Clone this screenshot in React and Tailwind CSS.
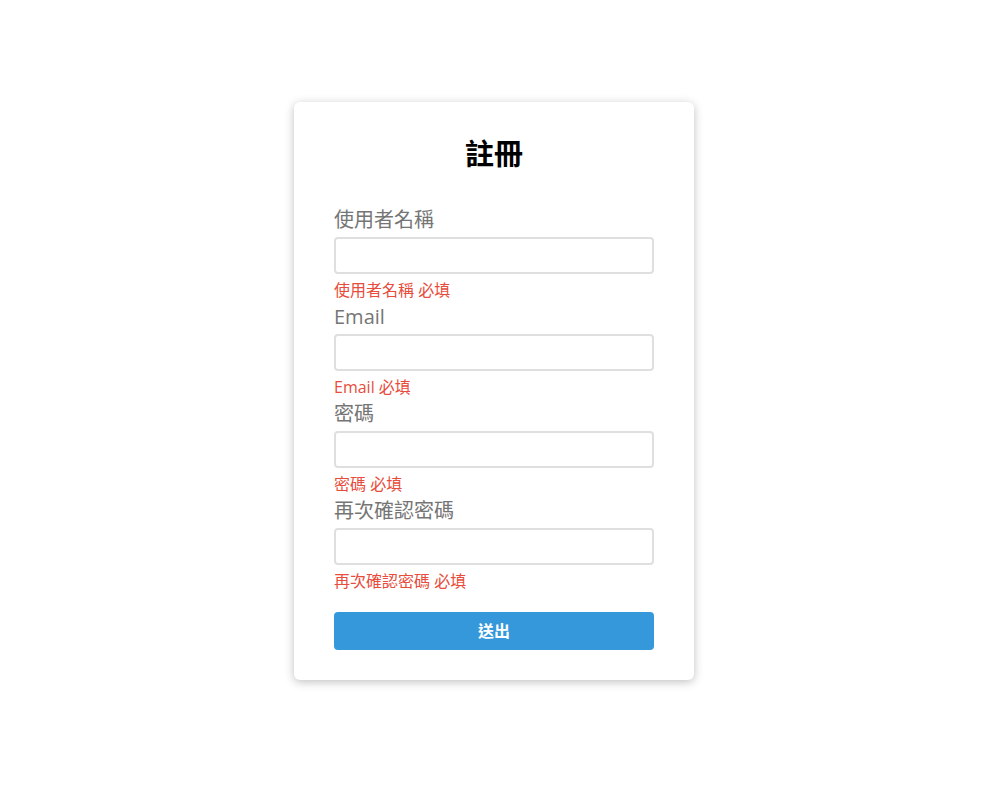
import React from 'react';

const fields = [
  { label: '使用者名稱', type: 'text' },
  { label: 'Email', type: 'email' },
  { label: '密碼', type: 'password' },
  { label: '再次確認密碼', type: 'password' },
];

const Field = ({ label, type }) => (
  <div>
    <label className="block text-[20px] leading-[27px] pt-[2px] text-[#757575] mb-[4px]">{label}</label>
    <input
      type={type}
      className="block w-full h-[37px] border-2 border-[#dfdfdf] rounded-[4px] bg-white px-2 outline-none"
    />
    <p className="mt-[5px] text-[16px] leading-[22px] text-[#e74c3c]">{label} 必填</p>
  </div>
);

export default function App() {
  return (
    <div
      className="min-h-[801px] w-full bg-white flex justify-center pt-[102px] pr-[12px]"
      style={{ fontFamily: '"Open Sans", "Noto Sans CJK TC", sans-serif' }}
    >
      <div className="w-[400px] h-[578px] bg-white rounded-[6px] shadow-[0_2px_10px_rgba(0,0,0,0.25)] px-[40px] pt-[36px] pb-[30px]">
        <h1 className="text-center text-[29px] leading-[32px] font-bold text-black mb-[34px]">註冊</h1>
        <form onSubmit={(e) => e.preventDefault()}>
          {fields.map((f) => (
            <Field key={f.label} label={f.label} type={f.type} />
          ))}
          <button
            type="submit"
            className="mt-[20px] w-full h-[38px] rounded-[4px] bg-[#3498db] text-white text-[16px] font-bold"
          >
            送出
          </button>
        </form>
      </div>
    </div>
  );
}
